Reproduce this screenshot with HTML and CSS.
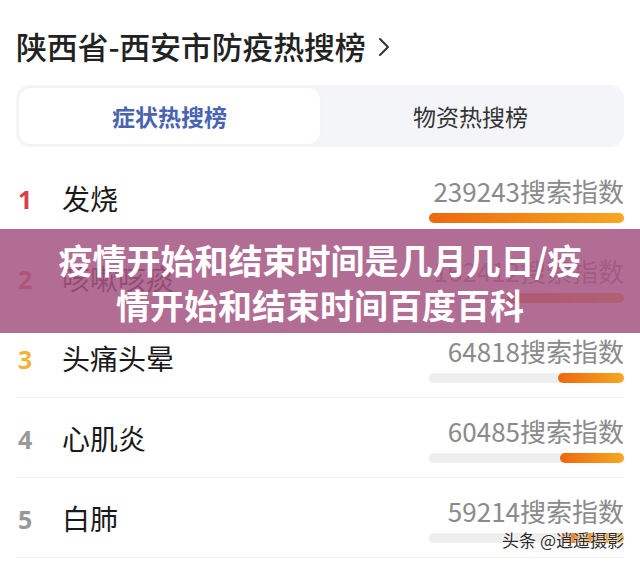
FILE: index.html
```html
<!DOCTYPE html>
<html lang="zh-CN">
<head>
<meta charset="utf-8">
<link rel="stylesheet" href="styles.css">
</head>
<body>
<div class="page">
  <h1 class="title">陕西省-西安市防疫热搜榜<svg class="chev" width="14" height="22" viewBox="0 0 14 22"><polyline points="3,3 11,11 3,19" fill="none" stroke="#333" stroke-width="2" stroke-linecap="round" stroke-linejoin="round"/></svg></h1>
  <div class="tabs">
    <div class="tab active">症状热搜榜</div>
    <div class="tab">物资热搜榜</div>
  </div>
  <ul class="list">
    <li class="row">
      <span class="num n1">1</span>
      <span class="name">发烧</span>
      <div class="stat"><div class="val">239243搜索指数</div><div class="track"><div class="fill" style="width:195px"></div></div></div>
    </li>
    <li class="row">
      <span class="num n2">2</span>
      <span class="name">咳嗽咳痰</span>
      <div class="stat"><div class="val">162412搜索指数</div><div class="track"><div class="fill" style="width:117px"></div></div></div>
    </li>
    <li class="row">
      <span class="num n3">3</span>
      <span class="name">头痛头晕</span>
      <div class="stat"><div class="val">64818搜索指数</div><div class="track"><div class="fill" style="width:66px"></div></div></div>
    </li>
    <li class="row">
      <span class="num">4</span>
      <span class="name">心肌炎</span>
      <div class="stat"><div class="val">60485搜索指数</div><div class="track"><div class="fill" style="width:64px"></div></div></div>
    </li>
    <li class="row">
      <span class="num">5</span>
      <span class="name">白肺</span>
      <div class="stat"><div class="val">59214搜索指数</div><div class="track"><div class="fill" style="width:63px"></div></div></div>
    </li>
  </ul>
  <div class="banner">疫情开始和结束时间是几月几日/疫<br>情开始和结束时间百度百科</div>
  <div class="mark">头条 @逍遥摄影</div>
</div>
</body>
</html>
```
FILE: styles.css
```css
* { box-sizing: border-box; }
html, body { margin: 0; padding: 0; background: #fff; }
body {
  width: 640px;
  height: 565px;
  overflow: hidden;
  font-family: "Noto Sans CJK SC", "Noto Sans", sans-serif;
  color: #1a1a1a;
}
.page {
  position: relative;
  padding: 26px 16px 0 16px;
}
.title {
  margin: 0;
  font-size: 31px;
  line-height: 40px;
  font-weight: 500;
  color: #222;
  display: flex;
  align-items: center;
  letter-spacing: -0.2px;
}
.chev { margin-left: 11px; margin-top: 2px; }
.tabs {
  margin-top: 19px;
  height: 62px;
  background: #f4f5f9;
  border-radius: 14px;
  padding: 3px;
  display: grid;
  grid-template-columns: 1fr 1fr;
}
.tab {
  display: flex;
  align-items: center;
  justify-content: center;
  font-size: 23px;
  color: #333;
  border-radius: 12px;
}
.tab.active {
  background: #fff;
  color: #4a64b2;
  font-weight: 700;
  box-shadow: 0 0 3px rgba(0,0,0,0.04);
}
.list {
  list-style: none;
  margin: 11px 0 0 0;
  padding: 0;
}
.row {
  height: 80px;
  border-bottom: 1px solid #f1f1f1;
  display: grid;
  grid-template-columns: 46px 1fr 195px;
}
.num {
  align-self: center;
  font-family: "Noto Sans", sans-serif;
  font-weight: 700;
  font-size: 25px;
  color: #999;
  padding-left: 2px;
  margin-top: 2px;
}
.n1 { color: #d5404e; }
.n2 { color: #e2553f; }
.n3 { color: #f2b33a; }
.name {
  align-self: center;
  font-size: 28px;
  color: #1a1a1a;
  margin-top: 1px;
}
.stat {
  padding-top: 18px;
}
.val {
  font-size: 26px;
  line-height: 30px;
  color: #8a8a8a;
  text-align: right;
  white-space: nowrap;
}
.track {
  margin-top: 7px;
  height: 10px;
  border-radius: 5px;
  background: #eeeeee;
  display: flex;
  justify-content: flex-end;
}
.fill {
  height: 10px;
  border-radius: 5px;
  background: linear-gradient(90deg, #ee680e, #f7a722);
}
.banner {
  position: absolute;
  left: 0;
  top: 229px;
  width: 640px;
  height: 104px;
  padding-top: 8px;
  background: rgba(165, 85, 130, 0.86);
  color: #fff;
  font-weight: 700;
  font-size: 34px;
  line-height: 45px;
  text-align: center;
}
.mark {
  position: absolute;
  right: 16px;
  top: 530px;
  font-size: 17px;
  line-height: 20px;
  color: #2a2a2a;
  text-shadow: 0 0 2px #fff, 0 0 2px #fff, 0 0 1px #fff;
}
```
